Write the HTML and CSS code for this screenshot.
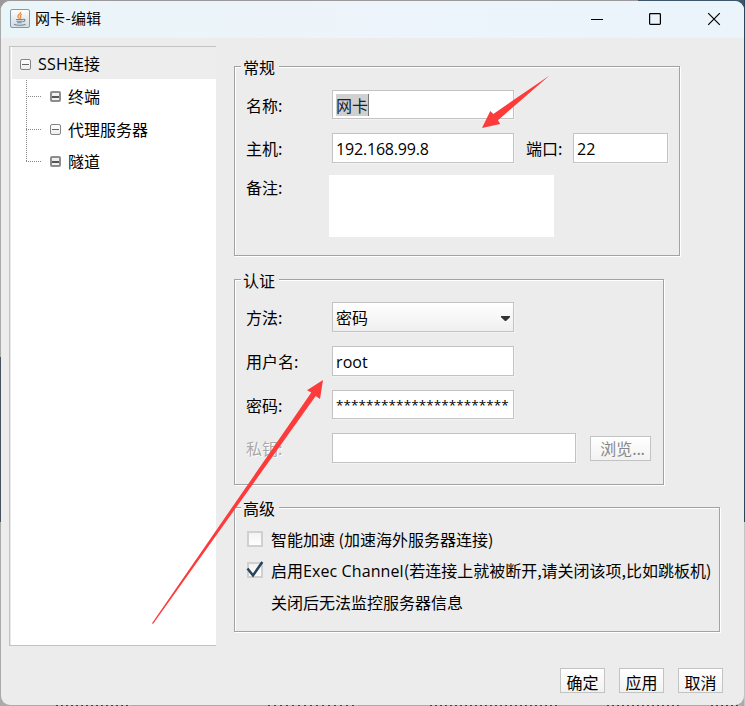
FILE: index.html
```
<!DOCTYPE html>
<html lang="zh-CN">
<head>
<meta charset="utf-8">
<title>网卡-编辑</title>
<link rel="stylesheet" href="styles.css">
</head>
<body>
<div class="window">
  <header class="titlebar">
    <svg class="app-icon" width="20" height="19" viewBox="0 0 20 19">
      <defs><linearGradient id="ic" x1="0" y1="0" x2="0" y2="1"><stop offset="0" stop-color="#fdfdfd"/><stop offset="1" stop-color="#d5dade"/></linearGradient></defs>
      <rect x=".5" y=".5" width="19" height="18" rx="1.5" fill="url(#ic)" stroke="#8299ae"/>
      <path d="M10.600 3c.5 2-3.200 2.700-2.600 4.600.2.900 1.200 1.300 1.300 2.200M11.800 5.300c-1.800 1.100-1.700 1.600-1.100 2.500.4.700 0 1.300-.5 1.800" fill="none" stroke="#ee8a3c" stroke-width="1.300"/>
      <path d="M6 10.500h7.200M6.500 12.300h6M7.200 13.800h4.500M4 15.200c2.500 1.300 9 1.300 11.500 0M13.200 10.300c2.600-.4 2 2.200-.5 2.500" fill="none" stroke="#6588a6" stroke-width="1.100"/>
    </svg>
    <h1>网卡<span class="hyphen">-</span>编辑</h1>
    <svg class="controls" width="132" height="14" viewBox="0 0 132 14" fill="none" stroke="#000">
      <path d="M0 7.500h12" stroke-width="1.200"/>
      <rect x="58.600" y="1.600" width="10.800" height="10.800" rx=".8" stroke-width="1.200"/>
      <path d="M117.200 1.200l11.600 11.600M128.800 1.200l-11.600 11.600" stroke-width="1.200"/>
    </svg>
  </header>
  <div class="content">
    <nav class="tree">
      <div class="root"><i class="toggle"></i><span><b>SSH</b>连接</span></div>
      <div class="branch">
        <div class="node"><i class="toggle dark"></i><span>终端</span></div>
        <div class="node"><i class="toggle"></i><span>代理服务器</span></div>
        <div class="node last"><i class="toggle dark"></i><span>隧道</span></div>
      </div>
    </nav>
    <main class="forms">
      <section class="group general">
        <h2>常规</h2>
        <div class="row h29"><label>名称:</label><div class="field"><span class="selected">网卡</span></div></div>
        <div class="row h30"><label>主机:</label><div class="field latin host">192.168.99.8</div><label class="port-label">端口:</label><div class="field port latin">22</div></div>
        <div class="row note"><label>备注:</label><div class="area"></div></div>
      </section>
      <section class="group auth">
        <h2>认证</h2>
        <div class="row h30"><label>方法:</label><div class="field combo"><span>密码</span><svg width="9" height="5"><path d="M0 0h9v1.200L5 5H4L0 1.200z" fill="#333"/></svg></div></div>
        <div class="row h30"><label>用户名:</label><div class="field latin user">root</div></div>
        <div class="row h29"><label>密码:</label><div class="field latin stars">***********************</div></div>
        <div class="row h30"><label class="disabled">私钥:</label><div class="field key"></div><div class="button browse">浏览<span class="dots">...</span></div></div>
      </section>
      <section class="group advanced">
        <h2>高级</h2>
        <div class="option"><i class="check"></i><span>智能加速 (加速海外服务器连接)</span></div>
        <div class="option"><i class="check"><svg width="18" height="18" viewBox="0 0 18 18"><path d="M1.500 7.500l5.500 7L16.300 1" fill="none" stroke="#27445f" stroke-width="2.500"/></svg></i><span>启用<b class="exec">Exec Channel</b>(若连接上就被断开,请关闭该项,比如跳板机)</span></div>
        <div class="option"><i class="spacer"></i><span>关闭后无法监控服务器信息</span></div>
      </section>
    </main>
  </div>
  <footer class="actions">
    <div class="button">确定</div><div class="button">应用</div><div class="button">取消</div>
  </footer>
</div>
<svg class="arrows" width="745" height="706" fill="#fd3b3b">
  <path d="M482 128l8.300-17 3 2.900L549.500 75.500 498 120.200l2.200 3.900z"/>
  <path d="M323 380l-16 10.300 4.300 2.300L152 623.300l1 .7L315.700 396l4.300 3z"/>
</svg>
</body>
</html>
```
FILE: styles.css
```
* { box-sizing: border-box; }
body {
  margin: 0;
  width: 745px;
  height: 706px;
  overflow: hidden;
  padding: 1px 1px 1px;
  background:
    repeating-linear-gradient(90deg, #444 0 2px, #bbb 2px 5px) 56px 705px / 75px 1px no-repeat,
    repeating-linear-gradient(90deg, #444 0 2px, #bbb 2px 6px) 268px 705px / 90px 1px no-repeat,
    repeating-linear-gradient(90deg, #444 0 2px, #bbb 2px 5px) 430px 705px / 128px 1px no-repeat,
    repeating-linear-gradient(90deg, #444 0 2px, #bbb 2px 5px) 607px 705px / 72px 1px no-repeat,
    repeating-linear-gradient(90deg, #444 0 2px, #bbb 2px 5px) 711px 705px / 30px 1px no-repeat,
    linear-gradient(#2b4659 0 522px, #c5c5c5 522px) 744px 0 / 1px 706px no-repeat,
    linear-gradient(90deg, #9b999c 0 638px, #3e566b 638px) 0 0 / 745px 8px no-repeat,
    linear-gradient(#aaa 0 357px, #46525e 357px 522px, #aaa 522px);
  font: 16px/24px "Noto Sans CJK SC", sans-serif;
  color: #000;
}
h1, h2 { margin: 0; font-weight: 400; }
b { font-weight: 400; font-family: "Open Sans", "Noto Sans", sans-serif; }
.window {
  width: 743px;
  height: 704px;
  border-radius: 9px;
  background: #ececec;
  overflow: hidden;
}
.titlebar {
  height: 37px;
  display: flex;
  align-items: center;
  padding: 0 24px 2px 9px;
  background: linear-gradient(90deg, #eaf5f8, #edf4fb 50%, #ecf4fb);
}
.titlebar h1 { margin-left: 5px; padding-bottom: 2px; font-size: 15px; line-height: 22px; }
.hyphen { display: inline-block; width: 6px; text-align: center; }
.controls { margin-left: auto; margin-right: -3px; }
.content { display: flex; height: 619px; padding: 8px 0 0 8px; }
.tree {
  width: 207px;
  height: 600px;
  background: #fff;
  border: solid #c2c2c2;
  border-width: 1px 0 1px 1px;
  box-shadow: inset 1px 0 0 #e8e8e8;
}
.root { display: flex; align-items: center; height: 32px; margin-left: 2px; padding: 3px 0 0 8px; background: #ededed; }
.root span { margin: -2px 0 0 7px; }
.root b { font-size: 16px; letter-spacing: .2px; }
.toggle {
  width: 11px;
  height: 11px;
  border: 1px solid #858585;
  border-radius: 2px;
  background: linear-gradient(#666, #666) center / 7px 1px no-repeat, linear-gradient(#fff, #eee);
}
.toggle.dark {
  border: 2px solid #8c8c8c;
  background: linear-gradient(#555, #555) center / 7px 2px no-repeat, #f0f0f0;
}
.branch {
  margin-left: 16px;
  height: 98px;
  padding-top: 1px;
  background: repeating-linear-gradient(#888 0 1px, #fff 1px 2px) 0 1px / 1px 82px no-repeat;
}
.node {
  display: flex;
  align-items: center;
  height: 32.5px;
  padding: 1px 0 0 24px;
  background: repeating-linear-gradient(90deg, #888 0 1px, #fff 1px 2px) 0 16px / 16px 1px no-repeat;
}
.node span { margin: -1px 0 0 7px; }
.forms { margin-left: 18px; padding-top: 20px; }
.group {
  border: 1px solid #a2a2a2;
  box-shadow: 1px 1px 0 #fff, inset 1px 1px 0 #fff;
  padding-left: 11px;
}
.group h2 {
  width: 38px;
  height: 24px;
  margin: -12px 0 0 -5px;
  padding-left: 2px;
  font-size: 16px;
  line-height: 24px;
  background: #ececec;
}
.general { width: 446px; height: 190px; }
.auth { width: 430px; height: 206px; margin-top: 23px; }
.advanced { width: 486px; height: 125px; margin-top: 22px; }
.row { display: flex; align-items: center; }
.row label { width: 86px; white-space: nowrap; }
.h29 { height: 29px; }
.h30 { height: 30px; }
.general .row:nth-of-type(1) { margin-top: 11px; }
.general .row:nth-of-type(2) { margin-top: 14px; }
.note { height: 62px; margin-top: 12px; }
.note label { align-self: flex-start; width: 83px; padding-top: 0; }
.area { width: 225px; height: 62px; background: #fff; }
.auth .row { margin-top: 14px; }
.auth .row:first-of-type { margin-top: 10px; }
.field {
  width: 182px;
  height: 100%;
  padding-left: 3px;
  border: 1px solid #c3c3c3;
  box-shadow: 1px 1px 0 #f3f3f3;
  background: #fff;
  display: flex;
  align-items: center;
  white-space: nowrap;
  overflow: hidden;
}
.latin { font-family: "Open Sans", "Noto Sans", sans-serif; padding-top: 2px; }
.host { font-size: 16px; letter-spacing: -.18px; }
.row .port-label { width: 47px; margin-left: 12px; }
.port { width: 95px; }
.user { letter-spacing: .1px; }
.stars { font-size: 13.5px; letter-spacing: .08px; padding-top: 0; }
.selected { height: 22px; line-height: 23px; background: #d0d0d0; border-right: 1px solid #777; color: #102438; }
.combo { justify-content: space-between; padding-right: 3px; background: linear-gradient(#fff, #efefef); }
.combo svg { margin-top: 2px; }
.key { width: 244px; }
.button {
  width: 45px;
  height: 25px;
  border: 1px solid #c3c3c3;
  background: linear-gradient(#fff, #f2f2f2);
  display: flex;
  align-items: center;
  justify-content: center;
  padding-top: 2px;
}
.browse { width: 61px; margin-left: 14px; color: #888; padding: 0 0 0 4px; }
.dots { letter-spacing: -.3px; }
.disabled { color: #aaa; text-shadow: 1px 1px 0 #fff; }
.option { display: flex; align-items: center; height: 31.500px; white-space: nowrap; }
.option:first-of-type { margin-top: 4px; }
.check {
  width: 16px;
  height: 16px;
  margin: -2px 8px 0 1px;
  border: 2px solid #d0d0d0;
  background: linear-gradient(#f2f2f2, #fff);
}
.option span { margin-top: -1px; }
.check svg { display: block; margin: -3px 0 0 -3px; }
.spacer { width: 25px; }
.exec { font-size: 16px; letter-spacing: .1px; }
.actions { display: flex; gap: 14px; padding: 11px 0 0 559px; }
.arrows { position: absolute; left: 0; top: 0; }
```
